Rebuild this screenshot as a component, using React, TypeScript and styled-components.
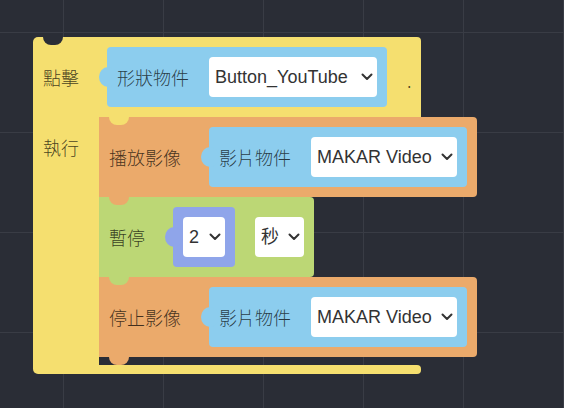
import React from "react";
import styled, { createGlobalStyle } from "styled-components";

const YELLOW = "#f5df6f";
const BLUE = "#8ccdee";
const ORANGE = "#ebaa6b";
const GREEN = "#bcd775";
const PERIWINKLE = "#8fa5ea";
const CANVAS = "#2a2d36";

const GlobalStyle = createGlobalStyle`
  html, body {
    margin: 0;
    padding: 0;
    background: ${CANVAS};
  }
`;

const Workspace = styled.div`
  width: 564px;
  height: 408px;
  box-sizing: border-box;
  padding: 37px 0 0 33px;
  overflow: hidden;
  background-color: ${CANVAS};
  background-image: linear-gradient(to right, #393c45 1px, transparent 1px),
    linear-gradient(to bottom, #393c45 1px, transparent 1px);
  background-size: 100px 100px;
  background-position: 63px 32px;
`;

const EventBlock = styled.div`
  display: flex;
  flex-direction: column;
  width: 388px;
`;

const Header = styled.div`
  position: relative;
  display: flex;
  align-items: center;
  gap: 20px;
  height: 80px;
  box-sizing: border-box;
  padding: 0 10px;
  background: ${YELLOW};
  border-radius: 5px 4px 0 0;

  &::before {
    content: "";
    position: absolute;
    left: 10px;
    top: 0;
    width: 20px;
    height: 8px;
    background: ${CANVAS};
    border-radius: 0 0 10px 10px;
  }

  &::after {
    content: "";
    position: absolute;
    left: 76px;
    bottom: -8px;
    width: 20px;
    height: 8px;
    background: ${YELLOW};
    border-radius: 0 0 10px 10px;
    z-index: 2;
  }
`;

const Label = styled.span<{ $dot?: boolean }>`
  flex-shrink: 0;
  font-family: "Noto Sans CJK TC", "Noto Sans", sans-serif;
  font-size: 18px;
  font-weight: 300;
  line-height: 20px;
  color: rgba(0, 0, 0, 0.72);
  white-space: nowrap;
  padding-top: ${({ $dot }) => ($dot ? "5px" : "0")};
`;

const Body = styled.div`
  display: flex;
`;

const Arm = styled.div`
  flex-shrink: 0;
  width: 66px;
  box-sizing: border-box;
  padding: 20px 0 0 10px;
  background: ${YELLOW};
`;

const Stack = styled.div`
  display: flex;
  flex-direction: column;
  align-items: flex-start;
  padding-bottom: 8px;
`;

const Footer = styled.div`
  height: 9px;
  background: ${YELLOW};
  border-radius: 0 4px 4px 5px;
`;

const StatementBlock = styled.div<{ $color: string }>`
  position: relative;
  display: flex;
  align-items: center;
  gap: 20px;
  height: 80px;
  box-sizing: border-box;
  padding: 0 10px;
  background: ${({ $color }) => $color};
  border-radius: 0 4px 4px 0;

  &::after {
    content: "";
    position: absolute;
    left: 10px;
    bottom: -8px;
    width: 20px;
    height: 8px;
    background: ${({ $color }) => $color};
    border-radius: 0 0 10px 10px;
    z-index: 2;
  }
`;

const ValueInput = styled.div<{ $color: string }>`
  position: relative;
  display: flex;
  align-items: center;
  gap: 20px;
  height: 60px;
  padding: 0 10px;
  margin-left: 8px;
  background: ${({ $color }) => $color};
  border-radius: 4px;

  &::before {
    content: "";
    position: absolute;
    left: -8px;
    top: 50%;
    width: 18px;
    height: 20px;
    margin-top: -10px;
    background: ${({ $color }) => $color};
    border-radius: 50%;
  }
`;

const Dropdown = styled.div<{ $width: number }>`
  position: relative;
  display: flex;
  align-items: center;
  justify-content: space-between;
  width: ${({ $width }) => $width}px;
  height: 40px;
  box-sizing: border-box;
  padding: 0 4px 0 6px;
  background: #fff;
  border-radius: 4px;
  font-family: "Liberation Sans", "Noto Sans CJK TC", sans-serif;
  font-size: 18px;
  line-height: 20px;
  color: #333;
  white-space: nowrap;

  svg {
    flex-shrink: 0;
  }
`;

const Chevron = () => (
  <svg width="12" height="8" viewBox="0 0 12 8">
    <polyline points="1.5,1.5 6,6 10.5,1.5" fill="none" stroke="#333" strokeWidth="2" strokeLinecap="round" strokeLinejoin="round" />
  </svg>
);

const Select: React.FC<{ value: string; width: number }> = ({ value, width }) => (
  <Dropdown $width={width}>
    <span>{value}</span>
    <Chevron />
  </Dropdown>
);

const VideoInput: React.FC = () => (
  <ValueInput $color={BLUE}>
    <Label>影片物件</Label>
    <Select value="MAKAR Video" width={146} />
  </ValueInput>
);

const App: React.FC = () => (
  <>
    <GlobalStyle />
    <Workspace>
      <EventBlock>
        <Header>
          <Label>點擊</Label>
          <ValueInput $color={BLUE}>
            <Label>形狀物件</Label>
            <Select value="Button_YouTube" width={168} />
          </ValueInput>
          <Label $dot>.</Label>
        </Header>
        <Body>
          <Arm>
            <Label>執行</Label>
          </Arm>
          <Stack>
            <StatementBlock $color={ORANGE}>
              <Label>播放影像</Label>
              <VideoInput />
            </StatementBlock>
            <StatementBlock $color={GREEN}>
              <Label>暫停</Label>
              <ValueInput $color={PERIWINKLE}>
                <Select value="2" width={42} />
              </ValueInput>
              <Select value="秒" width={49} />
            </StatementBlock>
            <StatementBlock $color={ORANGE}>
              <Label>停止影像</Label>
              <VideoInput />
            </StatementBlock>
          </Stack>
        </Body>
        <Footer />
      </EventBlock>
    </Workspace>
  </>
);

export default App;
